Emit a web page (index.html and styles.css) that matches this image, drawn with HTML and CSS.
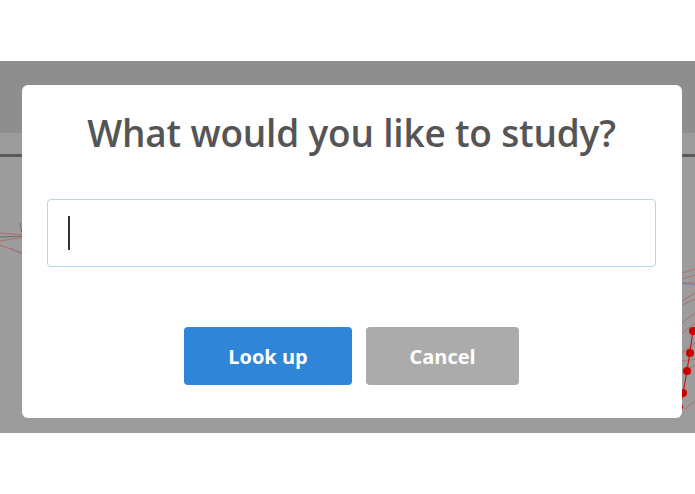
FILE: index.html
```html
<!DOCTYPE html>
<html>
<head>
<meta charset="utf-8">
<link rel="stylesheet" href="styles.css">
</head>
<body>
<div class="top"></div>
<div class="screen">
  <div class="header"></div>
  <div class="content">
    <div class="rule"></div>
    <svg class="graph" width="695" height="276" viewBox="0 0 695 276">
      <g stroke="#b55" stroke-width="0.8" fill="none" opacity="0.8">
        <path d="M0 100 L60 105"/><path d="M0 108 L60 98"/><path d="M0 112 L50 130"/><path d="M10 115 L60 140"/>
        <path d="M682 140 L695 136"/><path d="M682 146 L695 142"/><path d="M682 150 L695 150"/><path d="M682 168 L695 160"/>
        <path d="M682 172 L695 166"/><path d="M682 190 L695 180"/><path d="M682 200 L695 190"/><path d="M682 220 L695 210"/>
        <path d="M682 228 L695 226"/><path d="M682 240 L695 232"/>
        <path d="M500 276 L520 262"/><path d="M570 276 L590 262"/><path d="M610 276 L625 262"/><path d="M615 276 L628 262"/><path d="M685 276 L695 268"/>
      </g>
      <g stroke="#66c" stroke-width="0.8" fill="none" opacity="0.8">
        <path d="M455 262 L456 276"/><path d="M479 262 L478 276"/><path d="M600 262 L601 276"/><path d="M682 150 L695 152"/>
      </g>
      <g stroke="#555" stroke-width="0.8" fill="none" opacity="0.8">
        <path d="M0 104 L60 102"/><path d="M278 262 L279 276"/><path d="M402 262 L406 276"/><path d="M20 90 L22 100"/>
      </g>
      <g fill="#c00">
        <circle cx="693" cy="198" r="4"/><circle cx="690" cy="220" r="4"/><circle cx="687" cy="238" r="4"/><circle cx="683" cy="260" r="4"/>
        <circle cx="680" cy="274" r="3"/>
      </g>
      <g stroke="#c00" stroke-width="1" fill="none"><path d="M693 198 L687 238 L683 260 L680 276"/></g>
    </svg>
  </div>
  <div class="dialog">
    <h1 class="title">What would you like to study?</h1>
    <div class="input"><span class="caret"></span></div>
    <div class="actions">
      <button class="btn primary">Look up</button>
      <button class="btn secondary">Cancel</button>
    </div>
  </div>
</div>
</body>
</html>
```
FILE: styles.css
```css
html, body { margin: 0; padding: 0; background: #fff; }
body { width: 695px; height: 494px; overflow: hidden; font-family: "Open Sans", "Noto Sans", sans-serif; }
.top { height: 61px; }
.screen { position: relative; height: 372px; display: flex; flex-direction: column; }
.header { height: 72px; background: #8e8e8e; }
.content { position: relative; flex: 1; background: #9c9c9c; }
.rule { margin-top: 21px; height: 3px; background: #5a5a5a; }
.graph { position: absolute; left: 0; top: 0; }
.dialog {
  position: absolute; left: 22px; top: 24px; width: 660px; height: 333px;
  background: #fff; border-radius: 6px; box-sizing: border-box;
  padding: 0 26px 0 25px; display: flex; flex-direction: column; align-items: stretch;
}
.title {
  margin: 22px 0 0; text-align: center; font-size: 37px; font-weight: 600;
  color: #555; line-height: 52px; letter-spacing: -0.2px;
}
.input {
  margin-top: 40px; height: 68px; box-sizing: border-box;
  border: 1px solid #b0d8ee; border-radius: 4px; display: flex; align-items: center;
  padding-left: 20px;
}
.caret { width: 2px; height: 34px; background: #333; }
.actions { display: flex; justify-content: center; gap: 14px; margin-top: 60px; }
.btn {
  height: 58px; border: 0; border-radius: 4px; color: #fff; padding: 0;
  font-family: "Open Sans", "Noto Sans", sans-serif; font-size: 20px; font-weight: 700;
}
.primary { width: 168px; background: #2f86d8; }
.secondary { width: 153px; background: #ababab; }
```
